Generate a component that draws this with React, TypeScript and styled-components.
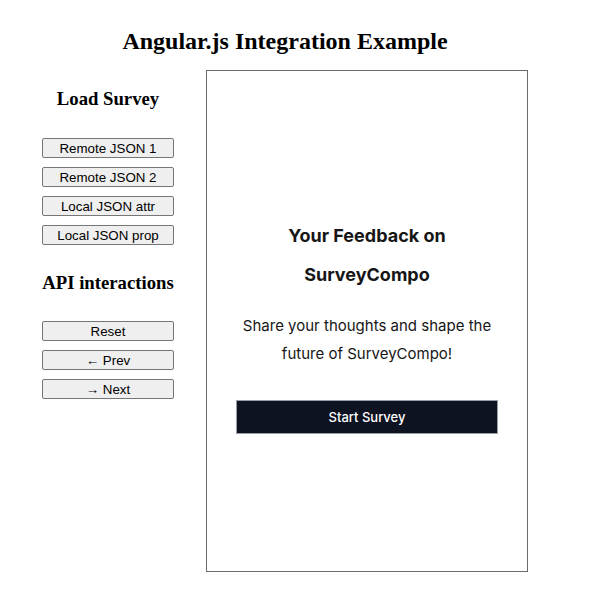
import React from "react";
import styled, { createGlobalStyle } from "styled-components";

const Global = createGlobalStyle`
  html, body { margin: 0; padding: 0; background: #fff; }
  body { font-family: "Liberation Serif", "Times New Roman", serif; color: #000; }
`;

const Page = styled.div`
  width: 486px;
  margin-left: 42px;
  padding-top: 26px;
`;

const Title = styled.h1`
  margin: 0 0 14px;
  font-size: 24px;
  line-height: 30px;
  font-weight: bold;
  text-align: center;
`;

const Layout = styled.div`
  display: flex;
  gap: 32px;
  align-items: flex-start;
`;

const Sidebar = styled.div`
  width: 132px;
  display: flex;
  flex-direction: column;
`;

const SectionTitle = styled.h3<{ $top: number }>`
  margin: ${(p) => p.$top}px 0 0;
  font-size: 18.72px;
  line-height: 22px;
  font-weight: bold;
  text-align: center;
  white-space: nowrap;
`;

const ButtonList = styled.div<{ $top: number }>`
  display: flex;
  flex-direction: column;
  gap: 9px;
  margin-top: ${(p) => p.$top}px;
`;

const SideButton = styled.button`
  box-sizing: border-box;
  width: 132px;
  height: 20px;
  padding: 0;
  background: #efefef;
  border: 1px solid #767676;
  border-radius: 2px;
  font-family: "Liberation Sans", Arial, sans-serif;
  font-size: 13.333px;
  color: #000;
`;

const Panel = styled.div`
  box-sizing: border-box;
  width: 322px;
  height: 502px;
  border: 1px solid #6b6b6b;
  display: flex;
  flex-direction: column;
  align-items: center;
  padding-top: 145px;
`;

const SurveyTitle = styled.h2`
  margin: 0;
  font-family: Inter, "Open Sans", sans-serif;
  font-size: 18px;
  line-height: 39px;
  font-weight: 700;
  color: #161616;
  text-align: center;
  width: 240px;
`;

const SurveyDesc = styled.p`
  margin: 18px 0 0;
  font-family: Inter, "Open Sans", sans-serif;
  font-size: 15px;
  line-height: 28px;
  color: #161616;
  text-align: center;
  width: 280px;
`;

const StartButton = styled.button`
  box-sizing: border-box;
  margin-top: 32px;
  width: 262px;
  height: 34px;
  background: #0d1320;
  border: 1px solid #9a9ea6;
  color: #fff;
  font-family: Inter, "Open Sans", sans-serif;
  font-size: 13px;
  font-weight: 500;
`;

export default function App() {
  return (
    <>
      <Global />
      <Page>
        <Title>Angular.js Integration Example</Title>
        <Layout>
          <Sidebar>
            <SectionTitle $top={18}>Load Survey</SectionTitle>
            <ButtonList $top={28}>
              <SideButton>Remote JSON 1</SideButton>
              <SideButton>Remote JSON 2</SideButton>
              <SideButton>Local JSON attr</SideButton>
              <SideButton>Local JSON prop</SideButton>
            </ButtonList>
            <SectionTitle $top={27}>API interactions</SectionTitle>
            <ButtonList $top={27}>
              <SideButton>Reset</SideButton>
              <SideButton>← Prev</SideButton>
              <SideButton>→ Next</SideButton>
            </ButtonList>
          </Sidebar>
          <Panel>
            <SurveyTitle>Your Feedback on SurveyCompo</SurveyTitle>
            <SurveyDesc>Share your thoughts and shape the future of SurveyCompo!</SurveyDesc>
            <StartButton>Start Survey</StartButton>
          </Panel>
        </Layout>
      </Page>
    </>
  );
}
